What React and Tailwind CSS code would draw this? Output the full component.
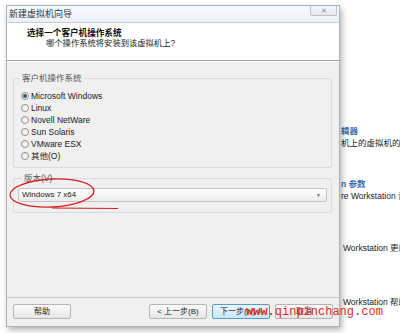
import React from "react";

const cjk = { fontFamily: '"Liberation Sans", "Noto Sans CJK SC", sans-serif' };

function Radio({ checked, label }) {
  return (
    <div className="flex h-[12px] items-center">
      <span className="ml-[7px] flex h-[8px] w-[8px] items-center justify-center rounded-full border border-[#8e8f8f] bg-gradient-to-br from-[#e6e6e6] to-[#ffffff]">
        {checked && <span className="h-[4px] w-[4px] rounded-full bg-[#2b4f7d]" />}
      </span>
      <span className="ml-[2px] text-[8.5px] leading-[12px] text-[#1a1a1a]">{label}</span>
    </div>
  );
}

function Btn({ children, focus }) {
  return (
    <div
      className={
        "flex h-[15px] w-[58px] items-center justify-center rounded-[2px] border text-[8px] text-[#222] " +
        (focus
          ? "border-[#5a9ad0] bg-gradient-to-b from-[#eaf6fd] to-[#c9e6f7]"
          : "border-[#b5b5b5] bg-gradient-to-b from-[#fbfbfb] to-[#e6e6e6]")
      }
    >
      {children}
    </div>
  );
}

export default function App() {
  return (
    <div className="relative h-[333px] w-[400px] overflow-hidden bg-white" style={cjk}>
      {/* background window fragments */}
      <div className="absolute left-[341px] top-[125px] flex w-[59px] flex-col overflow-hidden whitespace-nowrap text-[8.5px]">
        <div className="h-[12px] font-bold leading-[12px] text-[#3a6cb4]">辑器</div>
        <div className="h-[12px] leading-[12px] text-[#222]">机上的虚拟机的网络</div>
        <div className="mt-[29px] h-[12px] font-bold leading-[12px] text-[#3a6cb4]">n 参数</div>
        <div className="h-[12px] leading-[12px] text-[#222]">re Workstation 设置</div>
        <div className="mt-[40px] flex h-[12px] items-center leading-[12px] text-[#222]">
          <span className="mr-[2px] h-[5px] w-[2px] bg-[#bbb]" />Workstation 更新
        </div>
        <div className="mt-[42px] flex h-[12px] items-center leading-[12px] text-[#222]">
          <span className="mr-[2px] h-[5px] w-[2px] bg-[#bbb]" />Workstation 帮助
        </div>
      </div>

      {/* dialog window */}
      <div className="absolute left-[6px] top-[5px] flex h-[322px] w-[334px] flex-col border border-[#a9b1b9] bg-[#f0f0f0] shadow-[2px_3px_6px_rgba(0,0,0,0.3)]">
        {/* title bar */}
        <div className="flex h-[17px] items-start justify-between border-b border-[#c4ccd4] bg-gradient-to-b from-[#f7fafd] to-[#eaf1f8]">
          <span className="ml-[2px] mt-[3px] text-[9px] leading-[11px] text-[#333]">新建虚拟机向导</span>
          <div className="mr-[2px] flex h-[10px] w-[27px] items-center justify-center rounded-b-[2px] border border-t-0 border-[#b9c1c9] bg-gradient-to-b from-[#f3f6f9] to-[#e2e8ee] text-[7px] leading-none text-[#888]">
            ✕
          </div>
        </div>
        {/* header */}
        <div className="flex h-[38px] flex-col border-b border-[#a0a0a0] bg-white">
          <span className="ml-[20px] mt-[5px] text-[8.6px] font-bold leading-[10px] text-[#111]">选择一个客户机操作系统</span>
          <span className="ml-[39px] mt-[0px] text-[8.3px] leading-[10px] text-[#222]">哪个操作系统将安装到该虚拟机上?</span>
        </div>
        {/* body */}
        <div className="relative flex flex-1 flex-col border-t border-white px-[6px] pt-[11px]">
          <fieldset className="mr-[1px] rounded-[2px] border border-[#d5dde3] pb-[5px]">
            <legend className="ml-[6px] px-[2px] text-[8.5px] leading-[11px] text-[#555]">客户机操作系统</legend>
            <div className="flex flex-col pt-[6px]">
              <Radio checked label="Microsoft Windows" />
              <Radio label="Linux" />
              <Radio label="Novell NetWare" />
              <Radio label="Sun Solaris" />
              <Radio label="VMware ESX" />
              <Radio label="其他(O)" />
            </div>
          </fieldset>
          <fieldset className="mr-[1px] mt-[5px] rounded-[2px] border border-[#d5dde3] px-[4px] pb-[10px]">
            <legend className="ml-[4px] px-[2px] text-[8.5px] leading-[11px] text-[#555]">版本(V)</legend>
            <div className="mt-[4px] flex h-[14px] items-center justify-between rounded-[2px] border border-[#c4c4c4] bg-gradient-to-b from-[#ffffff] to-[#ececec] pl-[3px] pr-[5px]">
              <span className="text-[8px] leading-none text-[#222]">Windows 7 x64</span>
              <span className="text-[5px] leading-none text-[#666]">▼</span>
            </div>
          </fieldset>
          <div className="flex-1" />
        </div>
        {/* footer */}
        <div className="flex h-[29px] items-start border-t border-[#c9c9c9] px-[6px] pt-[6px]">
          <Btn>帮助</Btn>
          <div className="flex-1" />
          <div className="flex gap-[5px]">
            <Btn>&lt; 上一步(B)</Btn>
            <Btn focus>下一步(N) &gt;</Btn>
            <Btn>取消</Btn>
          </div>
        </div>
      </div>

      {/* red annotation */}
      <svg className="absolute left-0 top-0" width="400" height="333" viewBox="0 0 400 333">
        <ellipse cx="52" cy="193" rx="42" ry="14" fill="none" stroke="#d41f1f" strokeWidth="1.3" transform="rotate(-3 52 193)" />
        <path d="M52 208 L118 208.5" stroke="#d41f1f" strokeWidth="1.1" fill="none" />
      </svg>

      {/* watermark */}
      <div
        className="absolute left-[246px] top-[304px] whitespace-nowrap text-[12px] leading-[16px] text-[#e42a23]"
        style={{ fontFamily: '"Liberation Mono", monospace' }}
      >
        <span className="font-bold">www.</span>qinpinchang.com
      </div>
    </div>
  );
}
